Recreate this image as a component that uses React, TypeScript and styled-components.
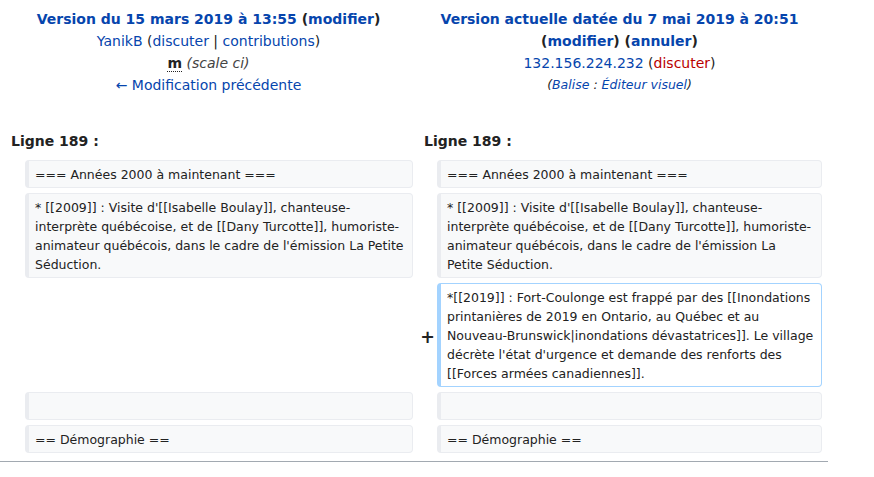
import React from "react";
import styled, { createGlobalStyle } from "styled-components";

const Global = createGlobalStyle`
  html, body { margin: 0; padding: 0; background: #fff; }
  body { font-family: "DejaVu Sans", sans-serif; color: #222; }
`;

const Page = styled.div`
  width: 828px;
  font-family: "DejaVu Sans", sans-serif;
  font-size: 14px;
  line-height: 22px;
  color: #222;
`;

const DiffGrid = styled.div`
  display: grid;
  grid-template-columns: 17px 388px 16px 385px;
  column-gap: 4px;
  row-gap: 5px;
  padding: 8px 4px 0;
`;

const Title = styled.div`
  grid-column: span 2;
  text-align: center;
`;

const TitleLine = styled.div<{ $bold?: boolean }>`
  font-weight: ${(p) => (p.$bold ? "bold" : "normal")};
`;

const Link = styled.a<{ $red?: boolean }>`
  color: ${(p) => (p.$red ? "#ba0000" : "#0645ad")};
  text-decoration: none;
`;

const Minor = styled.abbr`
  font-weight: bold;
  text-decoration: none;
  border-bottom: 1px dotted #222;
`;

const Comment = styled.span`
  font-style: italic;
  color: #444;
`;

const Tags = styled.div`
  font-style: italic;
  font-size: 12.5px;
  color: #222;
`;

const LineNo = styled.div`
  grid-column: span 2;
  font-weight: bold;
  padding: 0 0 3px 7px;
  margin-top: 29px;
`;

const Marker = styled.div`
  font-weight: bold;
  font-size: 17.5px;
  line-height: 1.2;
  text-align: right;
  align-self: center;
  margin-right: -2px;
  padding-top: 4px;
`;

const Cell = styled.div<{ $added?: boolean }>`
  font-size: 12.5px;
  line-height: 19px;
  padding: 3.5px 6px;
  min-height: 19px;
  border-style: solid;
  border-width: 1px 1px 1px 4px;
  border-radius: 4px;
  border-color: ${(p) => (p.$added ? "#a3d3ff" : "#eaecf0")};
  background: ${(p) => (p.$added ? "#fff" : "#f8f9fa")};
  color: #222;
  white-space: pre-wrap;
  word-wrap: break-word;
`;

const Empty = styled.div``;

const Rule = styled.div`
  margin-top: 8px;
  border-top: 1px solid #a2a9b1;
`;

const ctx1 = "=== Années 2000 à maintenant ===";
const ctx2 =
  "* [[2009]] : Visite d'[[Isabelle Boulay]], chanteuse-interprète québécoise, et de [[Dany Turcotte]], humoriste-animateur québécois, dans le cadre de l'émission La Petite Séduction.";
const added =
  "*[[2019]] : Fort-Coulonge est frappé par des [[Inondations printanières de 2019 en Ontario, au Québec et au Nouveau-Brunswick|inondations dévastatrices]]. Le village décrète l'état d'urgence et demande des renforts des [[Forces armées canadiennes]].";

export default function App() {
  return (
    <Page>
      <Global />
      <DiffGrid>
        <Title>
          <TitleLine $bold>
            <Link href="#">Version du 15 mars 2019 à 13:55</Link> (
            <Link href="#">modifier</Link>)
          </TitleLine>
          <TitleLine>
            <Link href="#">YanikB</Link> (<Link href="#">discuter</Link> |{" "}
            <Link href="#">contributions</Link>)
          </TitleLine>
          <TitleLine>
            <Minor title="modification mineure">m</Minor>{" "}
            <Comment>(scale ci)</Comment>
          </TitleLine>
          <TitleLine>
            <Link href="#">← Modification précédente</Link>
          </TitleLine>
        </Title>
        <Title>
          <TitleLine $bold>
            <Link href="#">Version actuelle datée du 7 mai 2019 à 20:51</Link>{" "}
            (<Link href="#">modifier</Link>) (<Link href="#">annuler</Link>)
          </TitleLine>
          <TitleLine>
            <Link href="#">132.156.224.232</Link> (
            <Link href="#" $red>
              discuter
            </Link>
            )
          </TitleLine>
          <Tags>
            (<Link href="#">Balise</Link> : <Link href="#">Éditeur visuel</Link>)
          </Tags>
        </Title>

        <LineNo>Ligne 189 :</LineNo>
        <LineNo>Ligne 189 :</LineNo>

        <Empty />
        <Cell>{ctx1}</Cell>
        <Empty />
        <Cell>{ctx1}</Cell>

        <Empty />
        <Cell>{ctx2}</Cell>
        <Empty />
        <Cell>{ctx2}</Cell>

        <Empty />
        <Empty />
        <Marker>+</Marker>
        <Cell $added>{added}</Cell>

        <Empty />
        <Cell />
        <Empty />
        <Cell />

        <Empty />
        <Cell>== Démographie ==</Cell>
        <Empty />
        <Cell>== Démographie ==</Cell>
      </DiffGrid>
      <Rule />
    </Page>
  );
}
